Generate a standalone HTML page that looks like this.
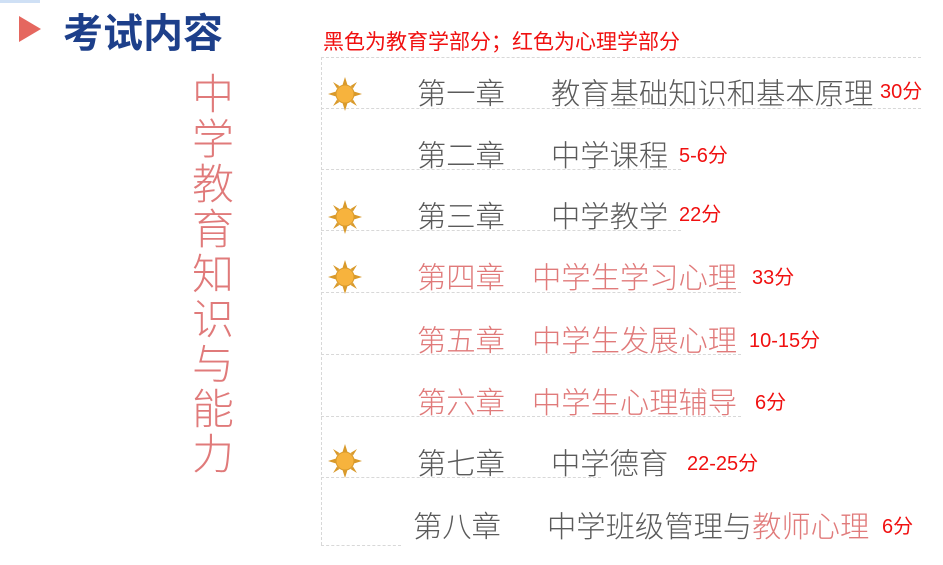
<!DOCTYPE html>
<html><head><meta charset="utf-8"><style>
body{margin:0;width:943px;height:565px;background:#fff;position:relative;overflow:hidden;font-family:"Liberation Sans","Noto Sans CJK SC",sans-serif}
.a{position:absolute;white-space:nowrap}
.t{font-size:29.3px;color:#5a5a5a;font-weight:300;line-height:1}
.r{color:#e07a7a}
.s{font-size:20px;color:#f01010;line-height:1}
.hl{position:absolute;left:321px;height:0;border-top:1px dashed #d8d8d8}
.sun{position:absolute;left:327px;width:36px;height:36px}
</style></head><body>
<div class="a" style="left:0;top:0;width:40px;height:3px;background:#cfe0f5"></div>
<svg class="a" style="left:17px;top:14px" width="26" height="30"><polygon points="2,2 24,15 2,28" fill="#e5675f"/></svg>
<div class="a" style="left:63px;top:10px;font-size:40px;font-weight:bold;color:#1d3f8a;line-height:1;font-family:'Noto Sans CJK SC',sans-serif">考试内容</div>
<div class="a s" style="left:323px;top:32px;font-size:21px">黑色为教育学部分；红色为心理学部分</div>
<div class="a" style="left:189px;top:72px;width:48px;font-size:42px;line-height:45px;color:#e07a7a;font-weight:300;white-space:normal;text-align:center">中学教育知识与能力</div>
<div class="a" style="left:321px;top:57px;height:488px;border-left:1px dashed #d8d8d8"></div>
<div class="hl" style="top:57px;width:600px"></div>
<div class="hl" style="top:108px;width:600px"></div>
<div class="hl" style="top:169px;width:360px"></div>
<div class="hl" style="top:230px;width:360px"></div>
<div class="hl" style="top:292px;width:420px"></div>
<div class="hl" style="top:354px;width:420px"></div>
<div class="hl" style="top:416px;width:420px"></div>
<div class="hl" style="top:477px;width:280px"></div>
<div class="hl" style="top:545px;width:80px"></div>
<svg width="0" height="0" style="position:absolute"><defs><g id="sun"><g fill="#d99a2b"><polygon points="18,1 20.5,9 15.5,9"/><polygon points="18,35 20.5,27 15.5,27"/><polygon points="1,18 9,15.5 9,20.5"/><polygon points="35,18 27,15.5 27,20.5"/><polygon points="6,6 12.5,10 10,12.5"/><polygon points="30,30 23.5,26 26,23.5"/><polygon points="30,6 26,12.5 23.5,10"/><polygon points="6,30 10,23.5 12.5,26"/></g><circle cx="18" cy="18" r="9" fill="#f7b33d" stroke="#d99a2b"/></g></defs></svg>
<svg class="sun" style="top:76px"><use href="#sun"/></svg>
<svg class="sun" style="top:199px"><use href="#sun"/></svg>
<svg class="sun" style="top:259px"><use href="#sun"/></svg>
<svg class="sun" style="top:443px"><use href="#sun"/></svg>
<div class="a t" style="left:417px;top:80px">第一章</div><div class="a t" style="left:551px;top:80px">教育基础知识和基本原理</div><div class="a s" style="left:880px;top:82px">30分</div>
<div class="a t" style="left:417px;top:142px">第二章</div><div class="a t" style="left:551px;top:142px">中学课程</div><div class="a s" style="left:679px;top:146px">5-6分</div>
<div class="a t" style="left:417px;top:203px">第三章</div><div class="a t" style="left:551px;top:203px">中学教学</div><div class="a s" style="left:679px;top:205px">22分</div>
<div class="a t r" style="left:417px;top:264px">第四章</div><div class="a t r" style="left:532px;top:264px">中学生学习心理</div><div class="a s" style="left:752px;top:268px">33分</div>
<div class="a t r" style="left:417px;top:327px">第五章</div><div class="a t r" style="left:532px;top:327px">中学生发展心理</div><div class="a s" style="left:749px;top:331px">10-15分</div>
<div class="a t r" style="left:417px;top:389px">第六章</div><div class="a t r" style="left:532px;top:389px">中学生心理辅导</div><div class="a s" style="left:755px;top:393px">6分</div>
<div class="a t" style="left:417px;top:450px">第七章</div><div class="a t" style="left:551px;top:450px">中学德育</div><div class="a s" style="left:687px;top:454px">22-25分</div>
<div class="a t" style="left:413px;top:513px">第八章</div><div class="a t" style="left:547px;top:513px">中学班级管理与<span class="r">教师心理</span></div><div class="a s" style="left:882px;top:517px">6分</div>
</body></html>
